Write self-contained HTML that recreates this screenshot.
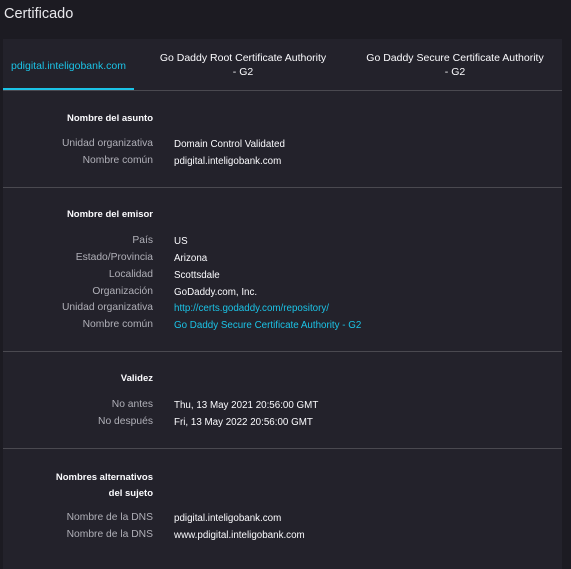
<!DOCTYPE html><html><head><style>
body{margin:0;width:571px;height:560px;background:#1c1b22;font-family:"Liberation Sans",sans-serif;color:#fbfbfe;position:relative;overflow:hidden}
.t{position:absolute;left:4px;top:6px;font-size:14.5px;color:#e8e8ec}
.p{position:absolute;left:3px;top:39px;width:559px;height:530px;background:#23222b}
.tab{position:absolute;font-size:10.5px;text-align:center;color:#fbfbfe;line-height:14px}
.l{position:absolute;font-size:9.5px;white-space:nowrap}
.k{right:409px;text-align:right;color:#b0b0b8;font-size:10.3px}
.v{left:171px;font-size:9.8px}
.h{font-weight:bold;text-align:right;right:409px}
.c{color:#1bc3e6}
.d{position:absolute;left:0;width:559px;height:1px;background:#4a4950}
</style></head><body>
<div class="t">Certificado</div>
<div class="p">
<div class="tab c" style="left:0;width:131px;top:20px">pdigital.inteligobank.com</div>
<div class="tab" style="left:140px;width:200px;top:12px">Go Daddy Root Certificate Authority<br>- G2</div>
<div class="tab" style="left:340px;width:224px;top:12px">Go Daddy Secure Certificate Authority<br>- G2</div>
<div style="position:absolute;left:0;top:49px;width:131px;height:2px;background:#1bc3e6"></div>
<div class="d" style="top:51px"></div>
<div class="l h" style="top:74px">Nombre del asunto</div>
<div class="l k" style="top:99px">Unidad organizativa</div><div class="l v" style="top:100px">Domain Control Validated</div>
<div class="l k" style="top:116px">Nombre común</div><div class="l v" style="top:117px">pdigital.inteligobank.com</div>
<div class="d" style="top:148px"></div>
<div class="l h" style="top:170px">Nombre del emisor</div>
<div class="l k" style="top:196px">País</div><div class="l v" style="top:197px">US</div>
<div class="l k" style="top:213px">Estado/Provincia</div><div class="l v" style="top:214px">Arizona</div>
<div class="l k" style="top:230px">Localidad</div><div class="l v" style="top:231px">Scottsdale</div>
<div class="l k" style="top:247px">Organización</div><div class="l v" style="top:248px">GoDaddy.com, Inc.</div>
<div class="l k" style="top:263px">Unidad organizativa</div><div class="l v c" style="top:264px">http://certs.godaddy.com/repository/</div>
<div class="l k" style="top:280px">Nombre común</div><div class="l v c" style="top:281px">Go Daddy Secure Certificate Authority - G2</div>
<div class="d" style="top:312px"></div>
<div class="l h" style="top:334px">Validez</div>
<div class="l k" style="top:360px">No antes</div><div class="l v" style="top:361px">Thu, 13 May 2021 20:56:00 GMT</div>
<div class="l k" style="top:377px">No después</div><div class="l v" style="top:378px">Fri, 13 May 2022 20:56:00 GMT</div>
<div class="d" style="top:409px"></div>
<div class="l h" style="top:431px;line-height:16px">Nombres alternativos<br>del sujeto</div>
<div class="l k" style="top:473px">Nombre de la DNS</div><div class="l v" style="top:474px">pdigital.inteligobank.com</div>
<div class="l k" style="top:490px">Nombre de la DNS</div><div class="l v" style="top:491px">www.pdigital.inteligobank.com</div>
</div>
</body></html>
